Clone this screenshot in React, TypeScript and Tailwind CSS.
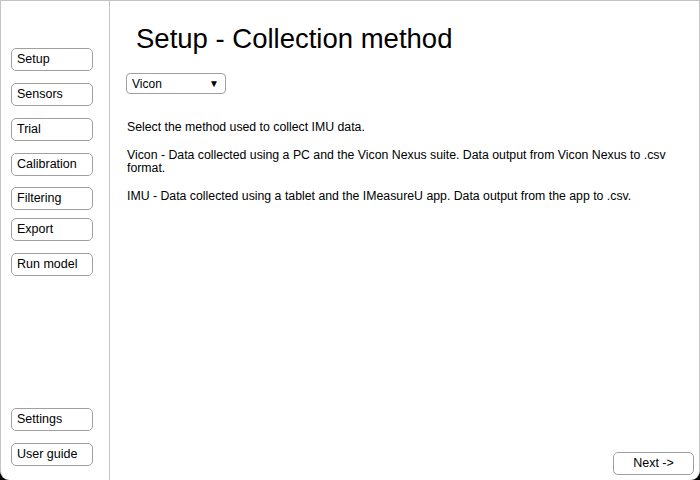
import React from "react";

const font = { fontFamily: "'Liberation Sans', Arial, sans-serif" };

function NavBtn({ label, className = "" }: { label: string; className?: string }) {
  return (
    <div
      className={`ml-[10px] w-[82px] h-[23px] border border-[#a0a0a0] rounded-[5px] bg-white flex items-center pl-[5px] text-[12.5px] text-black ${className}`}
    >
      {label}
    </div>
  );
}

export default function App() {
  return (
    <div className="w-[700px] h-[480px] bg-black" style={font}>
      <div className="w-[700px] h-[480px] bg-white border-t border-l border-r border-[#c4c4c4] rounded-b-[9px] flex overflow-hidden">
        <div className="w-[109px] shrink-0 border-r border-[#c4c4c4] flex flex-col pt-[47px] pb-[14px]">
          <NavBtn label="Setup" />
          <NavBtn label="Sensors" className="mt-[12px]" />
          <NavBtn label="Trial" className="mt-[12px]" />
          <NavBtn label="Calibration" className="mt-[12px]" />
          <NavBtn label="Filtering" className="mt-[11px]" />
          <NavBtn label="Export" className="mt-[8px]" />
          <NavBtn label="Run model" className="mt-[12px]" />
          <div className="flex-1" />
          <NavBtn label="Settings" />
          <NavBtn label="User guide" className="mt-[12px]" />
        </div>
        <div className="flex-1 flex flex-col pl-[16px] pr-[5px] pb-[5px]">
          <h1 className="text-[27.5px] leading-[34px] text-black pl-[10px] mt-[21px]">
            Setup - Collection method
          </h1>
          <div className="mt-[17px] w-[100px] h-[21px] border border-[#a0a0a0] rounded-[4px] flex items-center justify-between pl-[5px] pr-[6px] text-[12px]">
            <span>Vicon</span>
            <span className="text-[10px]">▼</span>
          </div>
          <div className="mt-[27px] text-[12.3px] leading-[13px] text-black pl-[1px] pr-[10px] flex flex-col gap-[15px]">
            <p>Select the method used to collect IMU data.</p>
            <p>
              Vicon - Data collected using a PC and the Vicon Nexus suite. Data output from Vicon Nexus to .csv
              format.
            </p>
            <p>IMU - Data collected using a tablet and the IMeasureU app. Data output from the app to .csv.</p>
          </div>
          <div className="flex-1" />
          <div className="self-end w-[81px] h-[23px] border border-[#a0a0a0] rounded-[5px] flex items-center justify-center text-[12.5px]">
            Next -&gt;
          </div>
        </div>
      </div>
    </div>
  );
}
